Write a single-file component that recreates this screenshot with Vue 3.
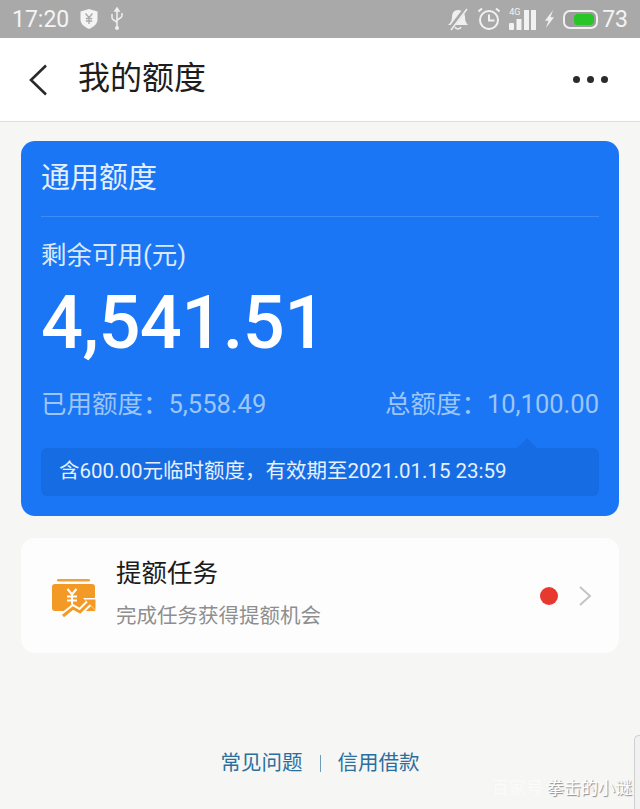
<template>
  <div class="page">
    <div class="status-bar">
      <div class="status-left">
        <span class="clock">17:20</span>
        <svg width="20" height="22" viewBox="0 0 20 22">
          <path d="M10 1l8.500 2.500v8c0 4.500-4 7.500-8.500 9.500-4.500-2-8.500-5-8.500-9.500v-8z" fill="#f4f4f4" />
          <path d="M6.500 5.500l3.500 4 3.500-4M10 9.500v6.500M6.800 10.500h6.400M6.800 13h6.400" fill="none" stroke="#a9a9a9" stroke-width="1.300" />
        </svg>
        <svg class="usb" width="14" height="24" viewBox="0 0 14 24">
          <path d="M7 1l2 3H5zM7 4v18M2 7v4c0 2 5 3 5 5M12 6v3c0 2-5 3-5 5" fill="none" stroke="#f0f0f0" stroke-width="1.500" />
          <circle cx="7" cy="21" r="2" fill="#f0f0f0" />
        </svg>
      </div>
      <div class="status-right">
        <svg width="22" height="24" viewBox="0 0 22 24">
          <path d="M11 3c-4 0-6 3-6 7 0 4-1.500 6-4 8h20c-2-2-3-4-3-8 0-4-3-7-7-7z" fill="#f0f0f0" />
          <path d="M8 20c1 2.500 5 2.500 6 0" fill="none" stroke="#f0f0f0" stroke-width="1.500" />
          <path d="M19 1L3 22" stroke="#a9a9a9" stroke-width="4" />
          <path d="M20 2L4 23" stroke="#f0f0f0" stroke-width="1.500" />
        </svg>
        <svg class="alarm" width="24" height="24" viewBox="0 0 24 24" fill="none" stroke="#f2f2f2" stroke-width="2">
          <circle cx="12" cy="13" r="9" />
          <path d="M12 7.500V13.500H17.500M1.500 4.500L5 1.500M22.500 4.500L19 1.500" />
        </svg>
        <div class="signal">
          <span class="net">4G</span>
          <svg width="27" height="24" viewBox="0 0 27 24" fill="#f2f2f2">
            <rect x="0" y="16" width="5" height="7" rx="1" />
            <rect x="7.500" y="12" width="5" height="11" />
            <rect x="15" y="3" width="5" height="20" />
            <rect x="22" y="3" width="5" height="20" />
          </svg>
        </div>
        <svg class="bolt" width="11" height="20" viewBox="0 0 12 22">
          <path d="M10 1L1 13h4l-3 8 9-12H7z" fill="#f0f0f0" />
        </svg>
        <div class="battery"><span class="battery-fill" :style="{ width: battery + '%' }"></span></div>
        <span class="percent">{{ battery }}</span>
      </div>
    </div>

    <header class="top-bar">
      <div class="top-left">
        <svg width="20" height="32" viewBox="0 0 20 32" fill="none">
          <path d="M18 1.500L3 16l15 14.500" stroke="#2a2a2a" stroke-width="2.600" />
        </svg>
        <h1>我的额度</h1>
      </div>
      <div class="more"><i></i><i></i><i></i></div>
    </header>

    <main class="content">
      <section class="quota-card">
        <h2>通用额度</h2>
        <div class="quota-body">
          <div class="avail-label">剩余可用(元)</div>
          <div class="avail-amount">4,541.51</div>
          <div class="quota-row">
            <span>已用额度：5,558.49</span>
            <span>总额度：10,100.00</span>
          </div>
          <div class="temp-note">含600.00元临时额度，有效期至2021.01.15 23:59</div>
        </div>
      </section>

      <section class="task-card">
        <svg class="task-icon" width="46" height="40" viewBox="0 0 46 40">
          <rect x="5" y="0" width="33" height="2.500" rx="1.200" fill="#f0a23a" />
          <path d="M3 5h37a3 3 0 0 1 3 3v24H3a3 3 0 0 1-3-3V8a3 3 0 0 1 3-3z" fill="#f39a26" />
          <path d="M15.500 10l4.500 5.500 4.500-5.500M20 15.500v10M15 17.500h10M15 21.500h10" fill="none" stroke="#fff" stroke-width="2" />
          <path d="M10 38l11-9 7 4 10-10" fill="none" stroke="#fdfdfd" stroke-width="7" />
          <path d="M31 19h14v14z" fill="#fdfdfd" />
          <path d="M11 37l10-8 7 4 10-10" fill="none" stroke="#f39a26" stroke-width="3" />
          <path d="M33 20.500h10.500V31z" fill="#f39a26" />
        </svg>
        <div class="task-text">
          <div class="task-title">提额任务</div>
          <div class="task-sub">完成任务获得提额机会</div>
        </div>
        <span class="red-dot"></span>
        <svg width="14" height="22" viewBox="0 0 14 22" fill="none">
          <path d="M2 2l10 9-10 9" stroke="#c4c4c4" stroke-width="2" />
        </svg>
      </section>

      <nav class="links">
        <a>常见问题</a>
        <span class="sep"></span>
        <a>信用借款</a>
      </nav>
    </main>

    <div class="handle"></div>
    <div class="mark"><span class="mark-site">百家号</span><span>拳击的小谜</span></div>
  </div>
</template>

<script setup>
const battery = 73
</script>

<style>
html,
body {
  margin: 0;
  background: #f6f6f5;
}
</style>

<style scoped>
.page {
  position: relative;
  width: 640px;
  height: 809px;
  overflow: hidden;
  background: #f6f6f5;
  font-family: "Roboto", "Noto Sans CJK SC", sans-serif;
}

.status-bar {
  height: 38px;
  padding: 0 12px;
  box-sizing: border-box;
  display: flex;
  align-items: center;
  justify-content: space-between;
  background: #a9a9a9;
  color: #f4f4f4;
}

.status-left,
.status-right {
  display: flex;
  align-items: center;
}

.status-left {
  gap: 11px;
}

.clock {
  font-size: 23px;
  margin-right: -1px;
}

.status-right svg {
  display: block;
}

.alarm {
  margin-left: 8px;
}

.signal {
  position: relative;
  margin-left: 8px;
}

.net {
  position: absolute;
  left: 0;
  top: 0;
  font-size: 9px;
  line-height: 10px;
}

.bolt {
  margin-left: 8px;
}

.battery {
  width: 35px;
  height: 19px;
  margin-left: 8px;
  padding: 2px;
  box-sizing: border-box;
  display: flex;
  justify-content: flex-end;
  border: 2px solid #f0f0f0;
  border-radius: 7px;
  background: #9c9c9c;
}

.battery-fill {
  display: block;
  height: 100%;
  border-radius: 4px;
  background: #28c528;
}

.percent {
  margin-left: 4px;
  font-size: 23px;
}

.top-bar {
  height: 84px;
  padding: 0 32px 4px 28px;
  box-sizing: border-box;
  display: flex;
  align-items: center;
  justify-content: space-between;
  background: #fff;
  border-bottom: 1px solid #dfdfdf;
}

.top-left {
  display: flex;
  align-items: center;
  gap: 30px;
}

.top-left svg {
  margin-top: 4px;
}

.top-left h1 {
  margin: 0;
  font-size: 32px;
  font-weight: 400;
  line-height: 40px;
  color: #1d1d1d;
}

.more {
  display: flex;
  gap: 7px;
  margin-top: 4px;
}

.more i {
  width: 7px;
  height: 7px;
  border-radius: 50%;
  background: #2b2b2b;
}

.content {
  padding: 19px 21px 0;
}

.quota-card {
  height: 375px;
  padding: 0 20px;
  box-sizing: border-box;
  border-radius: 14px;
  background: #1a76f4;
  color: #fff;
}

.quota-card h2 {
  margin: 0;
  height: 76px;
  box-sizing: border-box;
  padding-top: 19px;
  font-size: 29px;
  font-weight: 400;
  line-height: 36px;
  color: #e4effd;
  border-bottom: 1px solid #3d8bf6;
}

.quota-body {
  padding-top: 21px;
}

.avail-label {
  font-size: 25.500px;
  line-height: 34px;
  color: #dce9fc;
}

.avail-amount {
  margin-top: 10px;
  font-family: "Roboto", sans-serif;
  font-size: 74px;
  font-weight: 500;
  line-height: 82px;
  letter-spacing: -0.6px;
}

.quota-row {
  margin-top: 23px;
  display: flex;
  justify-content: space-between;
  font-size: 25.500px;
  line-height: 34px;
  color: #9cc5f9;
}

.temp-note {
  position: relative;
  margin-top: 27px;
  height: 48px;
  padding-left: 18px;
  border-radius: 6px;
  font-size: 20.500px;
  line-height: 46px;
  color: #e6f0fe;
  background: #166ce2;
}

.temp-note::before {
  content: "";
  position: absolute;
  right: 62px;
  top: -10px;
  border: 10px solid transparent;
  border-top: 0;
  border-bottom-color: #166ce2;
}

.task-card {
  margin-top: 22px;
  height: 115px;
  padding: 0 27px 0 31px;
  box-sizing: border-box;
  display: flex;
  align-items: center;
  border-radius: 14px;
  background: #fdfdfd;
}

.task-icon {
  flex: none;
  margin-top: 6px;
}

.task-text {
  flex: 1;
  margin-left: 18px;
  margin-top: -5px;
}

.task-title {
  font-size: 25.500px;
  line-height: 36px;
  color: #1b1b1b;
}

.task-sub {
  margin-top: 10px;
  font-size: 20.500px;
  line-height: 30px;
  color: #8e8e8e;
}

.red-dot {
  width: 18px;
  height: 18px;
  margin-right: 20px;
  border-radius: 50%;
  background: #e8392f;
}

.links {
  margin-top: 92px;
  display: flex;
  align-items: center;
  justify-content: center;
  gap: 17px;
  font-size: 20.500px;
  line-height: 36px;
  color: #2a6f9e;
}

.sep {
  width: 1px;
  height: 17px;
  background: #6d9dbd;
}

.handle {
  position: absolute;
  right: 0;
  top: 735px;
  bottom: 0;
  width: 5px;
  border-left: 1px solid #cfcfcf;
  border-top: 1px solid #cfcfcf;
  border-top-left-radius: 5px;
  background: #f1f1f1;
}

.mark {
  position: absolute;
  right: 8px;
  top: 776px;
  display: flex;
  gap: 4px;
  font-size: 17px;
  line-height: 24px;
  color: #fff;
  text-shadow: 1px 1px 1px #8a8a8a;
}

.mark-site {
  color: #fbfbfb;
  text-shadow: none;
}
</style>
